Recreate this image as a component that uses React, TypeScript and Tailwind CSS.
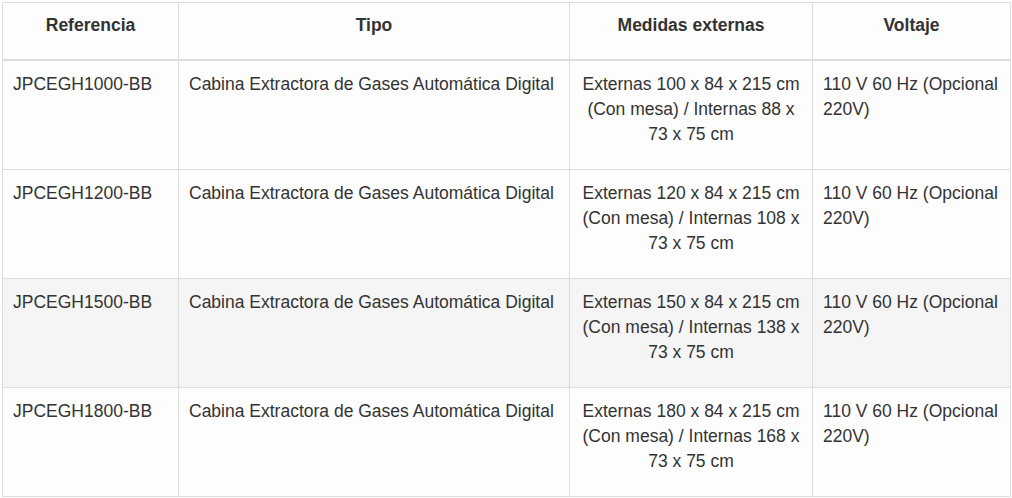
export default function App() {
  const rows = [
    { ref: "JPCEGH1000-BB", a: "100", b: "88" },
    { ref: "JPCEGH1200-BB", a: "120", b: "108" },
    { ref: "JPCEGH1500-BB", a: "150", b: "138" },
    { ref: "JPCEGH1800-BB", a: "180", b: "168" },
  ];
  const th = "border border-[#dddddd] border-b-2 align-top pt-[10px] pb-[21px] px-[10px] text-center font-bold";
  const td = "border border-[#dddddd] align-top pt-[11px] pb-[22px] px-[10px]";
  return (
    <div className="bg-white pl-[2px] pt-[2px] w-[1012px] h-[498px]" style={{ fontFamily: '"Liberation Sans", Arial, sans-serif' }}>
      <table className="table-fixed border-collapse w-[1009px] text-[17.5px] leading-[25px] text-[#333333]">
        <colgroup>
          <col className="w-[176px]" />
          <col className="w-[391px]" />
          <col className="w-[243px]" />
          <col className="w-[198px]" />
        </colgroup>
        <thead>
          <tr className="bg-[#fdfdfd]">
            <th className={th}>Referencia</th>
            <th className={th}>Tipo</th>
            <th className={th}>Medidas externas</th>
            <th className={th}>Voltaje</th>
          </tr>
        </thead>
        <tbody>
          {rows.map((r, i) => (
            <tr key={r.ref} className={i === 2 ? "bg-[#f5f5f5]" : "bg-[#fdfdfd]"}>
              <td className={td}>{r.ref}</td>
              <td className={td}>Cabina Extractora de Gases Automática Digital</td>
              <td className={`${td} text-center`}>
                Externas {r.a} x 84 x 215 cm (Con mesa) / Internas {r.b} x 73 x 75 cm
              </td>
              <td className={td}>110 V 60 Hz (Opcional 220V)</td>
            </tr>
          ))}
        </tbody>
      </table>
    </div>
  );
}
